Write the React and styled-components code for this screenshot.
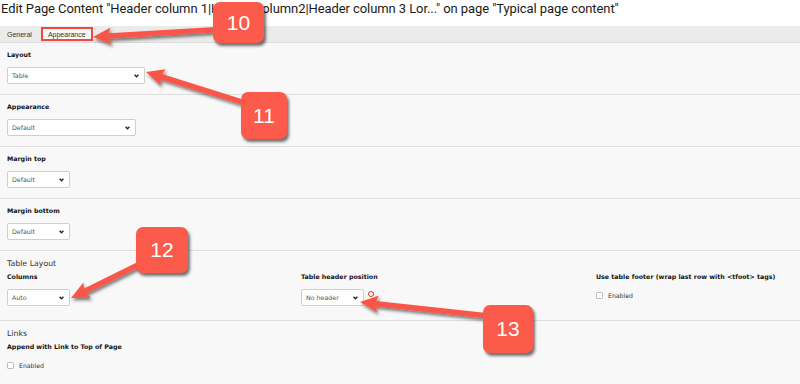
import React from 'react';
import styled, { createGlobalStyle } from 'styled-components';

const GlobalStyle = createGlobalStyle`
  html, body {
    margin: 0;
    padding: 0;
    background: #ffffff;
  }
  body {
    font-family: 'DejaVu Sans', Verdana, sans-serif;
    color: #1a1a1a;
  }
`;

const Page = styled.div`
  position: relative;
  width: 800px;
  height: 384px;
  overflow: hidden;
  background: #ffffff;
`;

const Title = styled.h1`
  margin: 0;
  height: 26px;
  padding-left: 1px;
  font-family: Roboto, 'Liberation Sans', sans-serif;
  font-size: 13px;
  font-weight: 400;
  line-height: 18px;
  letter-spacing: -0.08px;
  color: #1a1a1a;
  white-space: nowrap;
`;

const TabBar = styled.div`
  display: flex;
  align-items: center;
  height: 16px;
  background: #ebebeb;
  border-bottom: 1px solid #dcdcdc;
`;

const Tab = styled.div`
  display: flex;
  align-items: center;
  box-sizing: border-box;
  height: 14px;
  padding: 0 ${(p) => (p.$marked ? '5px' : '7px')};
  margin-left: ${(p) => (p.$marked ? '2px' : '0')};
  font-family: 'Liberation Sans', Arial, sans-serif;
  font-size: 7px;
  color: #333;
  background: ${(p) => (p.$active ? '#f8f8f8' : 'transparent')};
  border: ${(p) => (p.$marked ? '2px solid #f2473a' : 'none')};
`;

const Panel = styled.div`
  background: #f8f8f8;
`;

const Section = styled.section`
  padding: 7px 7px ${(p) => p.$bottom || 10}px;
  border-bottom: 1px solid #dedede;
`;

const Heading = styled.div`
  font-size: 7.8px;
  line-height: 11px;
  color: #333;
  margin-bottom: 3px;
`;

const Label = styled.div`
  font-size: 6.3px;
  font-weight: 700;
  line-height: 10px;
  color: #111;
  white-space: nowrap;
  margin-bottom: ${(p) => p.$gap ?? 7}px;
`;

const FieldRow = styled.div`
  display: flex;
  align-items: center;
  gap: 4px;
`;

const Select = styled.div`
  box-sizing: border-box;
  display: flex;
  align-items: center;
  justify-content: space-between;
  width: ${(p) => p.$w}px;
  height: 17px;
  padding: 0 5px 0 4px;
  background: #ffffff;
  border: 1px solid #cfcfcf;
  border-radius: 2px;
  font-size: 6.3px;
  color: #555;
`;

const Columns = styled.div`
  display: grid;
  grid-template-columns: 294px 295px 1fr;
`;

const Check = styled.label`
  display: flex;
  align-items: center;
  gap: 5px;
  height: 10px;
  font-size: 6.2px;
  color: #333;
`;

const Box = styled.span`
  box-sizing: border-box;
  width: 7px;
  height: 7px;
  background: #ffffff;
  border: 1px solid #b8b8b8;
  border-radius: 1.5px;
`;

const ChangedMark = styled.span`
  box-sizing: border-box;
  width: 6px;
  height: 6px;
  margin-top: -7px;
  border: 1.5px solid #e0342a;
  border-radius: 50%;
`;

const Overlay = styled.svg`
  position: absolute;
  left: 0;
  top: 0;
  pointer-events: none;
  overflow: visible;
`;

const Badge = styled.div`
  position: absolute;
  left: ${(p) => p.$x}px;
  top: ${(p) => p.$y}px;
  width: ${(p) => p.$w}px;
  height: ${(p) => p.$h}px;
  display: flex;
  align-items: center;
  justify-content: center;
  background: #fc5a4a;
  border-radius: 7px;
  box-shadow: 2px 3px 3px rgba(0, 0, 0, 0.55);
  font-family: 'Liberation Sans', Arial, sans-serif;
  font-size: 21px;
  color: #ffffff;
`;

const Chevron = () => (
  <svg width="5" height="4" viewBox="0 0 5 4">
    <path d="M0.6 0.8 L2.5 2.8 L4.4 0.8" fill="none" stroke="#222" strokeWidth="1.3" />
  </svg>
);

const Dropdown = ({ w, children }) => (
  <Select $w={w}>
    <span>{children}</span>
    <Chevron />
  </Select>
);

// arrow outline from tail to tip, with a slightly swept-back head
const arrowPoints = ([tx, ty], [hx, hy], shaft = 5.5, headW = 17, headL = 16) => {
  const dx = hx - tx;
  const dy = hy - ty;
  const len = Math.hypot(dx, dy);
  const ux = dx / len;
  const uy = dy / len;
  const nx = -uy;
  const ny = ux;
  const bx = hx - ux * headL;
  const by = hy - uy * headL;
  const wx = bx - ux * 2;
  const wy = by - uy * 2;
  const pts = [
    [tx + (nx * shaft) / 2, ty + (ny * shaft) / 2],
    [bx + (nx * shaft) / 2, by + (ny * shaft) / 2],
    [wx + (nx * headW) / 2, wy + (ny * headW) / 2],
    [hx, hy],
    [wx - (nx * headW) / 2, wy - (ny * headW) / 2],
    [bx - (nx * shaft) / 2, by - (ny * shaft) / 2],
    [tx - (nx * shaft) / 2, ty - (ny * shaft) / 2],
  ];
  return pts.map((p) => p.map((v) => v.toFixed(1)).join(',')).join(' ');
};

const arrows = [
  { tail: [228, 29], tip: [93, 37] },
  { tail: [258, 107], tip: [146, 72] },
  { tail: [148, 260], tip: [71, 298] },
  { tail: [498, 317], tip: [360, 302] },
];

const badges = [
  { n: '10', x: 213, y: 2, w: 51, h: 41 },
  { n: '11', x: 241, y: 92, w: 46, h: 47 },
  { n: '12', x: 136, y: 227, w: 52, h: 46 },
  { n: '13', x: 483, y: 305, w: 50, h: 48 },
];

const App = () => (
  <Page>
    <GlobalStyle />
    <Title>
      Edit Page Content "Header column 1|Header column2|Header column 3 Lor..." on page "Typical page
      content"
    </Title>

    <TabBar>
      <Tab>General</Tab>
      <Tab $active $marked>
        Appearance
      </Tab>
    </TabBar>

    <Panel>
      <Section>
        <Label>Layout</Label>
        <Dropdown w={138}>Table</Dropdown>
      </Section>

      <Section>
        <Label>Appearance</Label>
        <Dropdown w={129}>Default</Dropdown>
      </Section>

      <Section>
        <Label>Margin top</Label>
        <Dropdown w={63}>Default</Dropdown>
      </Section>

      <Section>
        <Label>Margin bottom</Label>
        <Dropdown w={63}>Default</Dropdown>
      </Section>

      <Section $bottom={14}>
        <Heading>Table Layout</Heading>
        <Columns>
          <div>
            <Label>Columns</Label>
            <Dropdown w={63}>Auto</Dropdown>
          </div>
          <div>
            <Label>Table header position</Label>
            <FieldRow>
              <Dropdown w={63}>No header</Dropdown>
              <ChangedMark />
            </FieldRow>
          </div>
          <div>
            <Label $gap={8}>Use table footer (wrap last row with &lt;tfoot&gt; tags)</Label>
            <Check>
              <Box />
              Enabled
            </Check>
          </div>
        </Columns>
      </Section>

      <Section $bottom={14}>
        <Heading>Links</Heading>
        <Label $gap={8}>Append with Link to Top of Page</Label>
        <Check>
          <Box />
          Enabled
        </Check>
      </Section>
    </Panel>

    <Overlay width="800" height="384" viewBox="0 0 800 384">
      <defs>
        <filter id="arrowShadow" x="-20%" y="-50%" width="140%" height="200%">
          <feDropShadow dx="1.5" dy="2.5" stdDeviation="1.4" floodColor="#000" floodOpacity="0.5" />
        </filter>
      </defs>
      {arrows.map((a, i) => (
        <polygon
          key={i}
          points={arrowPoints(a.tail, a.tip)}
          fill="#f9574a"
          filter="url(#arrowShadow)"
        />
      ))}
    </Overlay>

    {badges.map((b) => (
      <Badge key={b.n} $x={b.x} $y={b.y} $w={b.w} $h={b.h}>
        {b.n}
      </Badge>
    ))}
  </Page>
);

export default App;
